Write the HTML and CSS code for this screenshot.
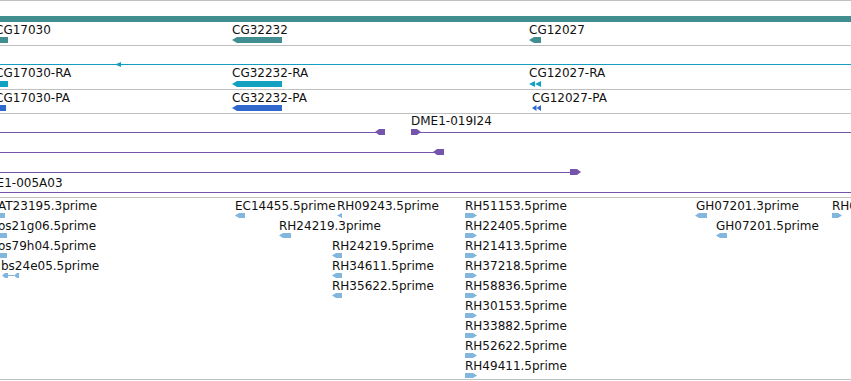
FILE: index.html
```html
<!DOCTYPE html>
<html lang="en">

<head>
  <meta charset="UTF-8">
  <meta name="viewport" content="width=device-width, initial-scale=1.0">
  <title>Genome view</title>
  <link rel="stylesheet" href="styles.css">
</head>

<body>

  <div class="view">

    <!-- genes -->
    <div class="track genes">
      <div class="span-bar"></div>
      <div class="feat" style="left:-5px">
        <div class="label">CG17030</div>
        <div class="glyph" style="margin-left:5px;width:8px"></div>
      </div>
      <div class="feat" style="left:232px">
        <div class="label">CG32232</div>
        <div class="glyph arrow-l" style="width:50px"></div>
      </div>
      <div class="feat" style="left:529px">
        <div class="label">CG12027</div>
        <div class="glyph arrow-l" style="width:12px"></div>
      </div>
    </div>

    <!-- transcripts -->
    <div class="track transcripts">
      <div class="intron"></div>
      <div class="strand-tip" style="left:115px"></div>
      <div class="feat" style="left:-5px">
        <div class="label">CG17030-RA</div>
        <div class="glyph" style="margin-left:5px;width:8px"></div>
      </div>
      <div class="feat" style="left:232px">
        <div class="label">CG32232-RA</div>
        <div class="glyph arrow-l" style="width:50px"></div>
      </div>
      <div class="feat" style="left:529px">
        <div class="label">CG12027-RA</div>
        <svg class="chev" width="12" height="6" viewBox="0 0 12 6">
          <polygon points="0,3 6,0 6,6" />
          <polygon points="6,3 12,0 12,6" />
        </svg>
      </div>
    </div>

    <!-- polypeptides -->
    <div class="track peptides">
      <div class="feat" style="left:-5px">
        <div class="label">CG17030-PA</div>
        <div class="glyph" style="margin-left:5px;width:6px"></div>
      </div>
      <div class="feat" style="left:232px">
        <div class="label">CG32232-PA</div>
        <div class="glyph arrow-l" style="width:50px"></div>
      </div>
      <div class="feat" style="left:532px">
        <div class="label">CG12027-PA</div>
        <svg class="chev" width="9" height="6" viewBox="0 0 9 6">
          <polygon points="0,3 4.5,0 4.5,6" />
          <polygon points="4.5,3 9,0 9,6" />
        </svg>
      </div>
    </div>

    <!-- BAC clones -->
    <div class="track clones">
      <div class="feat" style="left:411px;top:0">
        <div class="label">DME1-019I24</div>
      </div>
      <div class="rule" style="left:0;width:377px;top:18px"></div>
      <div class="end arrow-l" style="left:375px;top:15px;width:10px"></div>
      <div class="end arrow-r" style="left:411px;top:15px;width:10px"></div>
      <div class="rule" style="left:420px;right:0;top:18px"></div>

      <div class="rule" style="left:0;width:437px;top:38px"></div>
      <div class="end arrow-l" style="left:433px;top:35px;width:11px"></div>

      <div class="rule" style="left:0;width:572px;top:58px"></div>
      <div class="end arrow-r" style="left:570px;top:55px;width:11px"></div>

      <div class="feat" style="left:-23px;top:62px">
        <div class="label">DME1-005A03</div>
      </div>
      <div class="rule" style="left:0;right:0;top:78px"></div>
    </div>

    <!-- ESTs -->
    <div class="track ests">
      <div class="feat" style="left:-2px;top:1px">
        <div class="label">AT23195.3prime</div>
        <div class="glyph" style="margin-left:2px;width:5px"></div>
      </div>
      <div class="feat" style="left:-2px;top:21px">
        <div class="label">os21g06.5prime</div>
        <div class="glyph" style="margin-left:2px;width:7px"></div>
      </div>
      <div class="feat" style="left:-2px;top:41px">
        <div class="label">os79h04.5prime</div>
        <div class="glyph" style="margin-left:2px;width:7px"></div>
      </div>
      <div class="feat" style="left:1px;top:61px">
        <div class="label">bs24e05.5prime</div>
        <svg class="split" width="18" height="5" viewBox="0 0 18 5">
          <polygon points="1,2.5 4,0 7,0 7,5 4,5" />
          <rect x="7" y="2" width="6" height="1" />
          <polygon points="13,2.5 16,0 18,0 18,5 16,5" />
        </svg>
      </div>

      <div class="feat" style="left:235px;top:1px">
        <div class="label">EC14455.5prime</div>
        <div class="glyph arrow-l" style="width:10px"></div>
      </div>
      <div class="feat" style="left:279px;top:21px">
        <div class="label">RH24219.3prime</div>
        <div class="glyph arrow-l" style="width:12px"></div>
      </div>

      <div class="feat" style="left:337px;top:1px">
        <div class="label">RH09243.5prime</div>
        <div class="glyph arrow-l tip" style="width:5px"></div>
      </div>
      <div class="feat" style="left:332px;top:41px">
        <div class="label">RH24219.5prime</div>
        <div class="glyph arrow-l" style="width:10px"></div>
      </div>
      <div class="feat" style="left:332px;top:61px">
        <div class="label">RH34611.5prime</div>
        <div class="glyph arrow-l" style="width:10px"></div>
      </div>
      <div class="feat" style="left:332px;top:81px">
        <div class="label">RH35622.5prime</div>
        <div class="glyph arrow-l" style="width:10px"></div>
      </div>

      <div class="feat" style="left:465px;top:1px">
        <div class="label">RH51153.5prime</div>
        <div class="glyph arrow-r" style="width:12px"></div>
      </div>
      <div class="feat" style="left:465px;top:21px">
        <div class="label">RH22405.5prime</div>
        <div class="glyph arrow-r" style="width:12px"></div>
      </div>
      <div class="feat" style="left:465px;top:41px">
        <div class="label">RH21413.5prime</div>
        <div class="glyph arrow-r" style="width:12px"></div>
      </div>
      <div class="feat" style="left:465px;top:61px">
        <div class="label">RH37218.5prime</div>
        <div class="glyph arrow-r" style="width:12px"></div>
      </div>
      <div class="feat" style="left:465px;top:81px">
        <div class="label">RH58836.5prime</div>
        <div class="glyph arrow-r" style="width:12px"></div>
      </div>
      <div class="feat" style="left:465px;top:101px">
        <div class="label">RH30153.5prime</div>
        <div class="glyph arrow-r" style="width:12px"></div>
      </div>
      <div class="feat" style="left:465px;top:121px">
        <div class="label">RH33882.5prime</div>
        <div class="glyph arrow-r" style="width:12px"></div>
      </div>
      <div class="feat" style="left:465px;top:141px">
        <div class="label">RH52622.5prime</div>
        <div class="glyph arrow-r" style="width:12px"></div>
      </div>
      <div class="feat" style="left:465px;top:161px">
        <div class="label">RH49411.5prime</div>
        <div class="glyph arrow-r" style="width:12px"></div>
      </div>

      <div class="feat" style="left:696px;top:1px">
        <div class="label">GH07201.3prime</div>
        <div class="glyph arrow-l" style="margin-left:-1px;width:12px"></div>
      </div>
      <div class="feat" style="left:716px;top:21px">
        <div class="label">GH07201.5prime</div>
        <div class="glyph arrow-l" style="width:11px"></div>
      </div>
      <div class="feat" style="left:832px;top:1px">
        <div class="label">RH06285.5prime</div>
        <div class="glyph arrow-r" style="width:10px"></div>
      </div>
    </div>

  </div>

</body>

</html>
```

FILE: styles.css
```css
body {
  margin: 0;
  padding: 0;
  background: #fff;
  overflow: hidden;
  font-family: "DejaVu Sans", sans-serif;
}

.view {
  border-top: 1px solid #c0c0c0;
}

.track {
  position: relative;
  overflow: hidden;
  border-bottom: 1px solid #c0c0c0;
}

.feat {
  position: absolute;
  white-space: nowrap;
}

.label {
  font-size: 12px;
  line-height: 14px;
  color: #111;
}

.glyph {
  height: 6px;
}

/* strand shapes */
.arrow-l {
  clip-path: polygon(0 50%, 5px 0, 100% 0, 100% 100%, 5px 100%);
}

.arrow-r {
  clip-path: polygon(0 0, calc(100% - 5px) 0, 100% 50%, calc(100% - 5px) 100%, 0 100%);
}

.chev,
.split {
  display: block;
}

/* genes */
.genes {
  height: 44px;
}

.genes .span-bar {
  position: absolute;
  left: 0;
  right: 0;
  top: 15px;
  height: 6px;
  background: #408e90;
}

.genes .feat {
  top: 22px;
}

.genes .glyph {
  background: #408e90;
}

/* transcripts */
.transcripts {
  height: 43px;
}

.transcripts .intron {
  position: absolute;
  left: 0;
  right: 0;
  top: 18px;
  height: 1px;
  background: #139ec0;
}

.transcripts .strand-tip {
  position: absolute;
  top: 16px;
  width: 6px;
  height: 5px;
  background: #139ec0;
  clip-path: polygon(0 50%, 100% 0, 100% 100%);
}

.transcripts .feat {
  top: 20px;
}

.transcripts .glyph {
  margin-top: 1px;
  background: #13a1c2;
}

.transcripts .chev {
  margin-top: 1px;
  fill: #13a1c2;
}

/* polypeptides */
.peptides {
  height: 23px;
}

.peptides .feat {
  top: 1px;
}

.peptides .glyph {
  background: #3168cc;
}

.peptides .chev {
  fill: #3168cc;
}

/* clones */
.clones {
  height: 83px;
}

.clones .rule {
  position: absolute;
  height: 1px;
  background: #7555ab;
}

.clones .end {
  position: absolute;
  height: 6px;
  background: #7555ab;
}

.clones .arrow-l {
  clip-path: polygon(0 50%, 4px 0, 100% 0, 100% 100%, 4px 100%);
}

.clones .arrow-r {
  clip-path: polygon(0 0, calc(100% - 4px) 0, 100% 50%, calc(100% - 4px) 100%, 0 100%);
}

/* ESTs */
.ests {
  height: 181px;
}

.ests .glyph {
  height: 5px;
  background: #82b6dd;
}

.ests .arrow-l {
  clip-path: polygon(0 50%, 4px 0, 100% 0, 100% 100%, 4px 100%);
}

.ests .arrow-r {
  clip-path: polygon(0 0, calc(100% - 4px) 0, 100% 50%, calc(100% - 4px) 100%, 0 100%);
}

.ests .tip {
  clip-path: polygon(0 50%, 100% 0, 100% 100%);
}

.ests .split {
  fill: #82b6dd;
}
```
